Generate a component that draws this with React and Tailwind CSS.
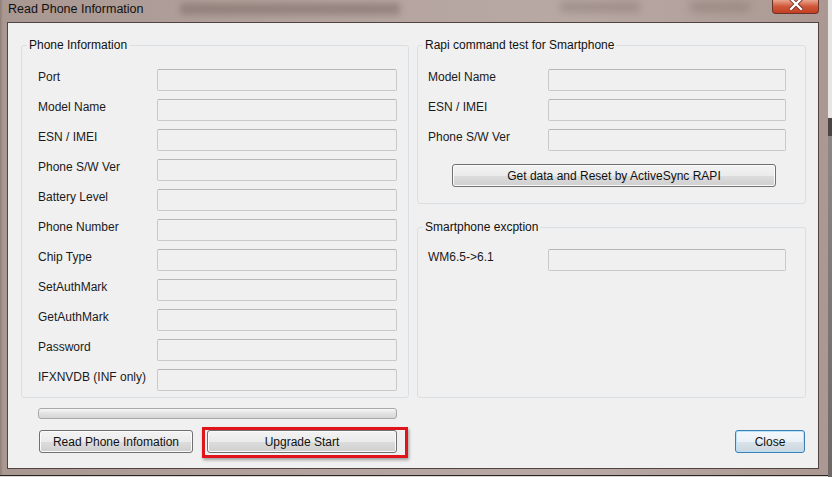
import React from 'react';

const leftRows = [
  'Port',
  'Model Name',
  'ESN / IMEI',
  'Phone S/W Ver',
  'Battery Level',
  'Phone Number',
  'Chip Type',
  'SetAuthMark',
  'GetAuthMark',
  'Password',
  'IFXNVDB (INF only)',
];

const rapiRows = ['Model Name', 'ESN / IMEI', 'Phone S/W Ver'];

const TextBox = ({ width }) => (
  <div
    className={`${width} h-[22px] rounded-[2px] border border-[#c9c9c9] border-t-[#b5b5b5] bg-[#f0f0f0]`}
  />
);

const Row = ({ label, labelWidth, boxWidth }) => (
  <div className="flex items-center h-[22px]">
    <span className={`${labelWidth} -mt-[7px] shrink-0`}>{label}</span>
    <TextBox width={boxWidth} />
  </div>
);

const WinButton = ({ children, className = '' }) => (
  <button
    className={`h-[23px] rounded-[3px] border border-[#707070] bg-[linear-gradient(#f3f3f3_0%,#ebebeb_50%,#dddddd_51%,#cfcfcf_100%)] text-[12px] text-[#111] leading-none shadow-[inset_0_0_0_1px_#fbfbfb] ${className}`}
  >
    {children}
  </button>
);

const GroupBox = ({ title, className = '', children }) => (
  <fieldset className={`rounded-[3px] border border-[#d9dfe3] ${className}`}>
    <legend className="ml-[5px] px-[2px] text-[12px] leading-[14px] text-[#111]">{title}</legend>
    {children}
  </fieldset>
);

export default function App() {
  return (
    <div className="w-[832px] h-[477px] overflow-hidden bg-[#d9d6d4] font-['Liberation_Sans',Arial,sans-serif] text-[12px] text-[#1a1a1a]">
      <div className="flex">
        {/* window */}
        <div className="w-[828px] h-[475px] flex flex-col bg-[linear-gradient(90deg,#8f7d78_0px,#a99792_3px,#b4a39e_40%,#b9a9a4_70%,#ab9893_100%)] shadow-[0_1px_0_#2a2422]">
          {/* title bar */}
          <div className="relative h-[22px] flex items-start justify-between overflow-hidden">
            <div className="absolute left-[180px] top-[3px] w-[220px] h-[12px] rounded-[3px] bg-[#8a7873] blur-[3px] opacity-70" />
            <div className="absolute left-[560px] top-[2px] w-[80px] h-[10px] rounded-[3px] bg-[#8e7c77] blur-[4px] opacity-60" />
            <div className="absolute left-[690px] top-[2px] w-[60px] h-[10px] rounded-[3px] bg-[#8e7c77] blur-[4px] opacity-60" />
            <span className="relative ml-[8px] mt-[1px] text-[12.5px] leading-[16px] text-[#111]">
              Read Phone Information
            </span>
            <div className="relative mr-[9px] w-[47px] h-[14px] rounded-b-[4px] border border-t-0 border-[#6b3327] bg-[linear-gradient(#e9a58c,#d0573a_50%,#c23f22)] flex items-start justify-center">
              <svg width="14" height="10" viewBox="0 0 14 10" className="mt-[0px]">
                <path d="M2 -1 L12 9 M12 -1 L2 9" stroke="#6a2a1c" strokeWidth="4" strokeLinecap="square" />
                <path d="M2 -1 L12 9 M12 -1 L2 9" stroke="#ffffff" strokeWidth="2.4" strokeLinecap="square" />
              </svg>
            </div>
          </div>

          {/* client area */}
          <div className="ml-[7px] w-[812px] h-[447px] border border-[#4f4442] bg-[#f0f0f0] flex flex-col pt-[15px]">
            <div className="flex pl-[13px] gap-[8px] h-[360px]">
              <GroupBox title="Phone Information" className="w-[388px]">
                <div className="flex flex-col gap-[8px] pt-[17px] pl-[16px]">
                  {leftRows.map((label) => (
                    <Row key={label} label={label} labelWidth="w-[119px]" boxWidth="w-[240px]" />
                  ))}
                </div>
              </GroupBox>

              <div className="flex flex-col w-[389px] gap-[16px]">
                <GroupBox title="Rapi command test for Smartphone" className="h-[166px]">
                  <div className="flex flex-col gap-[8px] pt-[17px] pl-[10px]">
                    {rapiRows.map((label) => (
                      <Row key={label} label={label} labelWidth="w-[120px]" boxWidth="w-[238px]" />
                    ))}
                    <WinButton className="mt-[5px] ml-[24px] w-[324px]">
                      Get data and Reset by ActiveSync RAPI
                    </WinButton>
                  </div>
                </GroupBox>

                <GroupBox title="Smartphone excption" className="flex-1">
                  <div className="flex flex-col pt-[15px] pl-[10px]">
                    <Row label="WM6.5->6.1" labelWidth="w-[120px]" boxWidth="w-[238px]" />
                  </div>
                </GroupBox>
              </div>
            </div>

            {/* progress bar */}
            <div className="ml-[30px] mt-[10px] w-[359px] h-[11px] rounded-[3px] border border-[#a8a8a8] bg-[linear-gradient(#f7f7f7,#e2e2e2_50%,#d6d6d6)]" />

            {/* buttons */}
            <div className="flex items-start mt-[11px] pl-[31px] pr-[13px]">
              <WinButton className="w-[154px]">Read Phone Infomation</WinButton>
              <div className="relative ml-[14px]">
                <WinButton className="w-[190px]">Upgrade Start</WinButton>
                <div className="absolute -left-[5px] -top-[3px] -right-[11px] -bottom-[5px] border-[3px] border-[#e0141b] shadow-[1px_2px_3px_rgba(0,0,0,0.35)] pointer-events-none" />
              </div>
              <div className="flex-1" />
              <button className="w-[70px] h-[23px] rounded-[3px] border border-[#3c7fb1] bg-[linear-gradient(#f4f8fb_0%,#eaf1f6_50%,#d9e3ea_51%,#ccd6de_100%)] shadow-[inset_0_0_0_1px_#b8e2f9] text-[12px] text-[#111] leading-none">
                Close
              </button>
            </div>
          </div>
        </div>

        {/* desktop strip */}
        <div className="flex-1 h-[477px] bg-[linear-gradient(#e8e6e5_0px,#e8e6e5_118px,#4b4644_118px,#4b4644_136px,#8c8684_136px,#6d6866_100%)]" />
      </div>
    </div>
  );
}
